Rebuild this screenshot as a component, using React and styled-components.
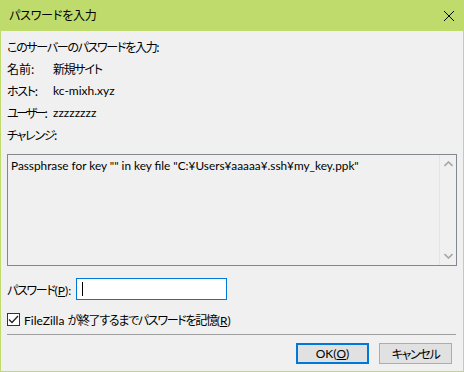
import React from "react";
import styled, { createGlobalStyle } from "styled-components";

const Global = createGlobalStyle`
  html, body { margin: 0; padding: 0; background: #ffffff; }
  body {
    font-family: Lato, "Noto Sans CJK JP", sans-serif;
    font-size: 12px;
    color: #000;
    font-feature-settings: "palt";
    white-space: nowrap;
  }
  * { box-sizing: border-box; }
`;

const Jp = styled.span`
  font-family: "Noto Sans CJK JP", sans-serif;
  letter-spacing: ${(p) => p.$ls ?? "-1.3px"};
`;

const Window = styled.div`
  width: 464px;
  height: 372px;
  border: 1px solid #bfdb6b;
  border-top: none;
  background: #f0f0f0;
  display: flex;
  flex-direction: column;
`;

const TitleBar = styled.div`
  height: 31px;
  background: #bfdb6b;
  display: flex;
  align-items: center;
  justify-content: space-between;
  padding: 0 9px 0 9px;
  margin: 0 -1px;
`;

const Title = styled.span`
  font-size: 12px;
  line-height: 16px;
  margin-top: -1px;
`;

const CloseIcon = styled.svg`
  width: 12px;
  height: 12px;
`;

const Body = styled.div`
  flex: 1;
  display: flex;
  flex-direction: column;
  padding: 5px 6px 0 6px;
`;

const InfoGrid = styled.div`
  display: grid;
  grid-template-columns: 46px 1fr;
  line-height: 21px;
  height: 105px;
`;

const FullRow = styled.div`
  grid-column: 1 / span 2;
`;

const Label = styled.div``;
const Value = styled.div``;

const TextBox = styled.div`
  margin-top: 13px;
  height: 112px;
  border: 1px solid #828790;
  background: #f0f0f0;
  display: flex;
`;

const TextContent = styled.div`
  flex: 1;
  padding: 3px 3px;
  line-height: 16px;
  font-size: 11.8px;
`;

const ScrollBar = styled.div`
  width: 17px;
  border-left: 1px solid #e4e4e4;
  display: flex;
  flex-direction: column;
  justify-content: space-between;
  align-items: center;
  padding: 6px 0 6px;
`;

const Chevron = styled.svg`
  width: 9px;
  height: 6px;
`;

const PasswordRow = styled.div`
  margin-top: 12px;
  display: flex;
  align-items: center;
  height: 22px;
`;

const PassLabel = styled.span`
  width: 69px;
`;

const Input = styled.div`
  width: 151px;
  height: 22px;
  border: 1px solid #0078d7;
  background: #fff;
  padding-left: 5px;
  display: flex;
  align-items: center;
`;

const Caret = styled.span`
  display: block;
  width: 1px;
  height: 14px;
  background: #000;
`;

const CheckRow = styled.label`
  margin-top: 11px;
  height: 16px;
  display: flex;
  align-items: center;
  gap: 4px;
`;

const CheckBox = styled.span`
  width: 13px;
  height: 13px;
  border: 1px solid #333;
  background: #fff;
  display: flex;
  align-items: center;
  justify-content: center;
`;

const Separator = styled.div`
  margin-top: 7px;
  height: 1px;
  background: #a0a0a0;
  margin-right: 1px;
`;

const ButtonRow = styled.div`
  margin-top: 8px;
  display: flex;
  justify-content: flex-end;
  gap: 10px;
  padding-right: 5px;
`;

const Button = styled.button`
  width: 73px;
  height: 21px;
  font: inherit;
  font-size: 12px;
  line-height: 1;
  color: #000;
  background: #e1e1e1;
  border: ${(p) => (p.$default ? "2px solid #0078d7" : "1px solid #adadad")};
  padding: 0;
  display: flex;
  align-items: center;
  justify-content: center;
`;

const U = styled.span`
  text-decoration: underline;
`;

export default function App() {
  return (
    <>
      <Global />
      <Window>
        <TitleBar>
          <Title>
            <Jp $ls="-0.2px">パスワードを入力</Jp>
          </Title>
          <CloseIcon viewBox="0 0 12 12">
            <path d="M1 1 L11 11 M11 1 L1 11" stroke="#000" strokeWidth="1" fill="none" />
          </CloseIcon>
        </TitleBar>
        <Body>
          <InfoGrid>
            <FullRow>
              <Jp>このサーバーのパスワードを入力:</Jp>
            </FullRow>
            <Label>
              <Jp $ls="0px">名前:</Jp>
            </Label>
            <Value>
              <Jp>新規サイト</Jp>
            </Value>
            <Label>
              <Jp>ホスト:</Jp>
            </Label>
            <Value>kc-mixh.xyz</Value>
            <Label>
              <Jp $ls="-2.3px">ユーザー:</Jp>
            </Label>
            <Value>zzzzzzzz</Value>
            <FullRow>
              <Jp>チャレンジ:</Jp>
            </FullRow>
          </InfoGrid>
          <TextBox>
            <TextContent>
              Passphrase for key "" in key file "C:¥Users¥aaaaa¥.ssh¥my_key.ppk"
            </TextContent>
            <ScrollBar>
              <Chevron viewBox="0 0 9 6">
                <path d="M0.5 5 L4.5 1 L8.5 5" stroke="#a6a6a6" strokeWidth="1.6" fill="none" />
              </Chevron>
              <Chevron viewBox="0 0 9 6">
                <path d="M0.5 1 L4.5 5 L8.5 1" stroke="#a6a6a6" strokeWidth="1.6" fill="none" />
              </Chevron>
            </ScrollBar>
          </TextBox>
          <PasswordRow>
            <PassLabel>
              <Jp>パスワード</Jp>(<U>P</U>):
            </PassLabel>
            <Input>
              <Caret />
            </Input>
          </PasswordRow>
          <CheckRow>
            <CheckBox>
              <svg width="11" height="9" viewBox="0 0 11 9">
                <path d="M1 4.5 L4 7.5 L10 1" stroke="#222" strokeWidth="1.3" fill="none" />
              </svg>
            </CheckBox>
            <span>
              FileZilla <Jp>が終了するまでパスワードを記憶</Jp>(<U>R</U>)
            </span>
          </CheckRow>
          <Separator />
          <ButtonRow>
            <Button $default>
              OK(<U>O</U>)
            </Button>
            <Button>
              <Jp>キャンセル</Jp>
            </Button>
          </ButtonRow>
        </Body>
      </Window>
    </>
  );
}
